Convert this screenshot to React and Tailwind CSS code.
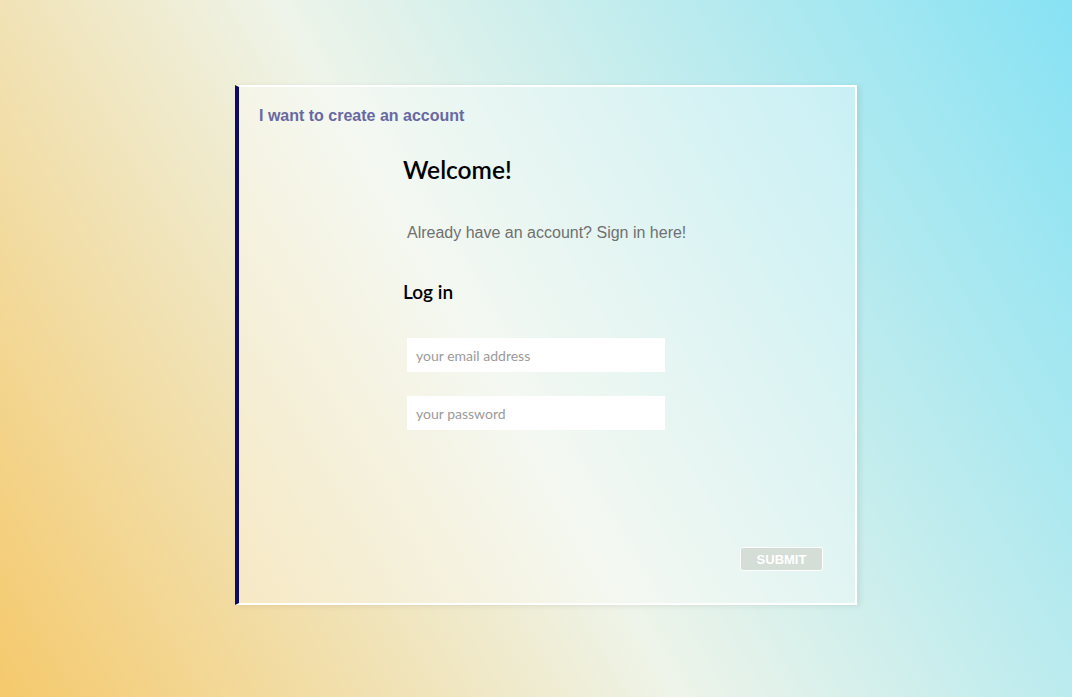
import React from "react";

export default function App() {
  return (
    <div className="w-full h-[697px] overflow-hidden bg-[linear-gradient(60deg,#f5c96c_0%,#eef4e9_46%,#87e2f4_100%)] pt-[85px] pl-[235px]">
      <div className="w-[622px] h-[520px] border-l-4 border-l-[#0c0c66] border-y-2 border-r-2 border-y-white border-r-white bg-white/[0.37] shadow-[3px_1px_6px_rgba(0,0,0,0.08)] flex flex-col">
        <div className="pt-[16px] pl-[20px]">
          <a className="text-[16px] leading-[20px] font-bold text-[#6868a2] font-['Liberation_Sans',Arial,sans-serif] cursor-pointer">
            I want to create an account
          </a>
        </div>
        <div className="ml-[164px] flex flex-col font-['Lato',sans-serif]">
          <h1 className="mt-[28px] text-[24.5px] leading-[30px] font-semibold text-black">Welcome!</h1>
          <p className="mt-[38px] ml-[4px] text-[16px] leading-[20px] text-[#707070] font-['Liberation_Sans',Arial,sans-serif]">
            Already have an account? Sign in here!
          </p>
          <h2 className="mt-[37px] text-[19px] leading-[24px] font-semibold text-black">Log in</h2>
          <input
            className="mt-[34px] ml-[4px] w-[258px] h-[34px] bg-white px-[9px] text-[14px] outline-none placeholder:text-[#9a9a9a] font-['Lato',sans-serif]"
            placeholder="your email address"
          />
          <input
            type="password"
            className="mt-[24px] ml-[4px] w-[258px] h-[34px] bg-white px-[9px] text-[14px] outline-none placeholder:text-[#9a9a9a] font-['Lato',sans-serif]"
            placeholder="your password"
          />
        </div>
        <div className="flex-1" />
        <div className="flex justify-end pr-[32px] pb-[32px]">
          <button className="w-[83px] h-[24px] rounded-[3px] border border-white bg-[#d4ddd6] text-white text-[13px] font-bold font-['Liberation_Sans',Arial,sans-serif] leading-none">
            SUBMIT
          </button>
        </div>
      </div>
    </div>
  );
}
